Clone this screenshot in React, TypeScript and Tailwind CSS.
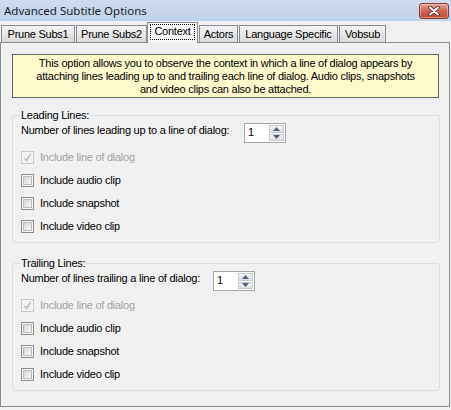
import React from 'react';

type Tab = { label: string; cls: string; selected?: boolean };

const tabs: Tab[] = [
  { label: 'Prune Subs1', cls: 'w-[74px]' },
  { label: 'Prune Subs2', cls: 'ml-[1px] w-[71px]' },
  { label: 'Context', cls: 'w-[51px]', selected: true },
  { label: 'Actors', cls: 'ml-[1px] w-[39px]' },
  { label: 'Language Specific', cls: 'ml-[1px] w-[99px]' },
  { label: 'Vobsub', cls: 'ml-[1px] w-[47px]' },
];

const CheckMark: React.FC<{ color: string }> = ({ color }) => (
  <svg width="9" height="9" viewBox="0 0 9 9">
    <path d="M1.5 4.8 L3.6 7.3 L7.6 1.2" fill="none" stroke={color} strokeWidth="1.3" />
  </svg>
);

const CheckBox: React.FC<{ label: string; checked?: boolean; disabled?: boolean }> = ({ label, checked, disabled }) => (
  <div className="flex h-[23px] items-center">
    <span
      className={`flex h-[13px] w-[13px] items-center justify-center border ${
        disabled ? 'border-[#c8c8c8] bg-[#f4f4f4]' : 'border-[#8e8f8f] bg-[#f4f4f4]'
      }`}
    >
      <span
        className={`flex h-[9px] w-[9px] items-center justify-center ${
          disabled ? 'bg-[#f1f1f1]' : 'border border-[#b9bcc0] bg-gradient-to-br from-[#d4d6d9] to-[#f7f7f7]'
        }`}
      >
        {checked && <CheckMark color={disabled ? '#b3b3b3' : '#4a5f97'} />}
      </span>
    </span>
    <span className={`ml-[6px] ${disabled ? 'text-[#a3a3a3]' : 'text-black'}`}>{label}</span>
  </div>
);

const SpinBox: React.FC = () => (
  <div className="flex h-[20px] w-[42px] shrink-0 border border-[#a8a8a8] bg-white">
    <span className="flex-1 pl-[3px] pt-[2px] leading-[13px] text-black">1</span>
    <div className="flex w-[16px] flex-col gap-[1px] py-[1px] pr-[1px]">
      <span className="flex flex-1 items-center justify-center border border-[#c7c9cc] bg-gradient-to-b from-[#f5f5f5] to-[#dedede]">
        <svg width="7" height="4" viewBox="0 0 7 4">
          <path d="M0 4 L3.5 0 L7 4 Z" fill="#4d6185" />
        </svg>
      </span>
      <span className="flex flex-1 items-center justify-center border border-[#c7c9cc] bg-gradient-to-b from-[#f5f5f5] to-[#dedede]">
        <svg width="7" height="4" viewBox="0 0 7 4">
          <path d="M0 0 L3.5 4 L7 0 Z" fill="#4d6185" />
        </svg>
      </span>
    </div>
  </div>
);

const LinesGroup: React.FC<{ title: string; prompt: string; labelWidth: string; className?: string }> = ({
  title,
  prompt,
  labelWidth,
  className = '',
}) => (
  <fieldset className={`ml-[11px] w-[428px] rounded-[3px] border border-[#d5dfe5] pb-[4px] ${className}`}>
    <legend className="ml-[7px] px-[1px] leading-[13px] text-black">{title}</legend>
    <div className="pl-[8px]">
      <div className="mt-[1px] flex items-start">
        <span className={`${labelWidth} shrink-0 whitespace-nowrap pt-[1px] leading-[13px] text-black`}>{prompt}</span>
        <SpinBox />
      </div>
      <div className="mt-[3px] flex flex-col">
        <CheckBox label="Include line of dialog" checked disabled />
        <CheckBox label="Include audio clip" />
        <CheckBox label="Include snapshot" />
        <CheckBox label="Include video clip" />
      </div>
    </div>
  </fieldset>
);

export default function App() {
  return (
    <div className="flex h-[410px] w-[451px] flex-col bg-[#f0f0f0] font-['Liberation_Sans',Arial,sans-serif] text-[11px] leading-[13px] tracking-[-0.25px]">
      {/* title bar */}
      <div className="flex h-[21px] items-start justify-between bg-gradient-to-b from-[#cddcee] to-[#bfd2e9]">
        <span className="pl-[4px] pt-[3px] font-['Noto_Sans','Open_Sans',sans-serif] text-[11.5px] leading-[15px] tracking-normal text-[#1e1e1e]">
          Advanced Subtitle Options
        </span>
        <button className="mr-[2px] mt-[3px] flex h-[16px] w-[30px] items-center justify-center rounded-[3px] border border-[#8a3a31] bg-gradient-to-b from-[#e5a194] via-[#d2634f] to-[#c54633] shadow-[inset_0_0_0_1px_rgba(255,255,255,0.35)]">
          <svg width="12" height="10" viewBox="0 0 12 10">
            <path d="M2 1.5 L10 8.5 M10 1.5 L2 8.5" stroke="#3b2a28" strokeWidth="3.6" strokeLinecap="round" />
            <path d="M2 1.5 L10 8.5 M10 1.5 L2 8.5" stroke="#ffffff" strokeWidth="2" strokeLinecap="round" />
          </svg>
        </button>
      </div>

      {/* tab strip */}
      <div className="flex h-[21px] items-end pl-[1px]">
        {tabs.map((t) =>
          t.selected ? (
            <div
              key={t.label}
              className={`relative z-10 -mb-[1px] flex h-[21px] items-start justify-center border border-b-0 border-[#898c95] bg-gradient-to-b from-white to-[#f7f7f7] pt-[1px] ${t.cls}`}
            >
              <span className="border border-dotted border-black px-[3px] pb-[1px] leading-[13px] text-black">
                {t.label}
              </span>
            </div>
          ) : (
            <div
              key={t.label}
              className={`flex h-[17px] items-center justify-center border border-b-0 border-[#898c95] bg-gradient-to-b from-[#f3f3f3] via-[#e8e8e8] to-[#d9d9d9] text-black ${t.cls}`}
            >
              {t.label}
            </div>
          )
        )}
      </div>

      {/* tab page */}
      <div className="h-[365px] w-[450px] border border-[#898c95] bg-[#f0f0f0]">
        <div className="ml-[11px] mt-[11px] h-[44px] w-[427px] border border-[#646464] bg-[#fffacd] pt-[2px] text-center leading-[13px] text-black">
          This option allows you to observe the context in which a line of dialog appears by
          <br />
          attaching lines leading up to and trailing each line of dialog. Audio clips, snapshots
          <br />
          and video clips can also be attached.
        </div>

        <LinesGroup
          className="mt-[11px]"
          title="Leading Lines:"
          prompt="Number of lines leading up to a line of dialog:"
          labelWidth="w-[223px]"
        />
        <LinesGroup
          className="mt-[14px]"
          title="Trailing Lines:"
          prompt="Number of lines trailing a line of dialog:"
          labelWidth="w-[192px]"
        />
      </div>
    </div>
  );
}
